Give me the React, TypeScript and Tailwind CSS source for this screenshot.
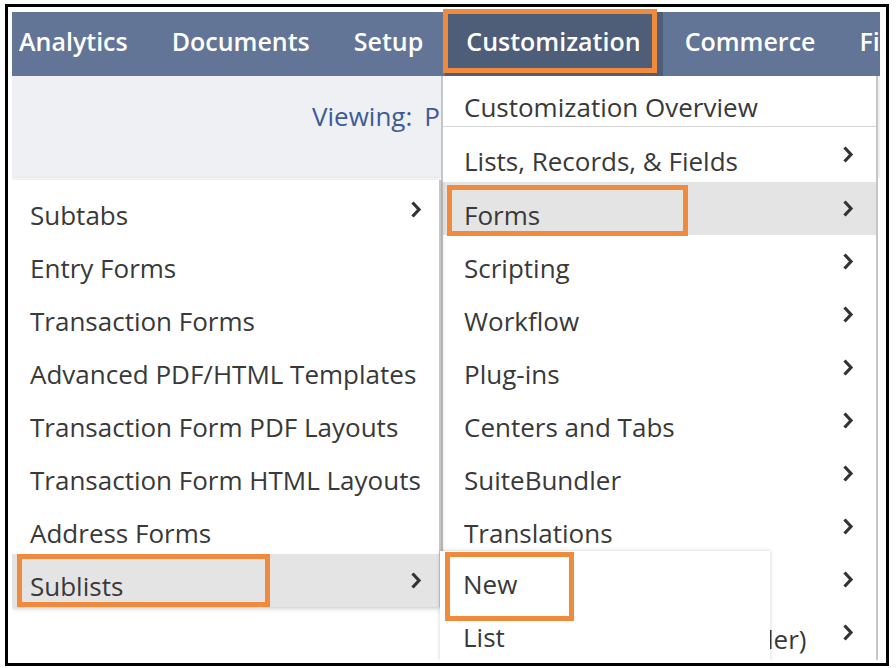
import React from 'react';

type Row = { label: string; sub?: boolean; active?: boolean };

const Chevron = () => (
  <svg width="12" height="19" viewBox="0 0 12 19" className="shrink-0">
    <path d="M2.5 2.5 L9 9.5 L2.5 16.5" fill="none" stroke="#333333" strokeWidth="3.2" />
  </svg>
);

const navItems = ['Analytics', 'Documents', 'Setup', 'Customization', 'Commerce', 'Financial'];

const formsMenu: Row[] = [
  { label: 'Subtabs', sub: true },
  { label: 'Entry Forms' },
  { label: 'Transaction Forms' },
  { label: 'Advanced PDF/HTML Templates' },
  { label: 'Transaction Form PDF Layouts' },
  { label: 'Transaction Form HTML Layouts' },
  { label: 'Address Forms' },
  { label: 'Sublists', sub: true, active: true },
];

const customMenu: Row[] = [
  { label: 'Forms', sub: true, active: true },
  { label: 'Scripting', sub: true },
  { label: 'Workflow', sub: true },
  { label: 'Plug-ins', sub: true },
  { label: 'Centers and Tabs', sub: true },
  { label: 'SuiteBundler', sub: true },
  { label: 'Translations', sub: true },
  { label: '', sub: true },
  { label: 'Integration (Custom Reader)', sub: true },
];

// orange callout frame drawn over the screenshot
const Callout = ({ className }: { className: string }) => (
  <div className={`absolute border-[5px] border-[#f08a3c] pointer-events-none ${className}`} />
);

export default function App() {
  return (
    <div className="relative w-[896px] h-[668px] bg-white pt-[4px] pl-[5px] font-['Open_Sans',sans-serif] text-[26px] leading-[35px] text-[#393939]">
      <div className="w-[884px] h-[662px] border-[3px] border-black pt-[5px] pl-[4px]">
        <div className="relative w-[868px] h-[648px] overflow-hidden bg-white">
          {/* Top nav */}
          <div className="h-[64px] bg-[#637596] overflow-hidden">
            <div className="flex h-full -ml-[15px] whitespace-nowrap text-[25px]">
              {navItems.map((item) => (
                <div
                  key={item}
                  className={`flex items-center px-[22px] pb-[6px] font-semibold text-white ${
                    item === 'Customization' ? 'bg-[#4e5d78] pl-[21px]' : ''
                  }`}
                >
                  {item}
                </div>
              ))}
            </div>
          </div>

          {/* Viewing band */}
          <div className="h-[102px] bg-[#eff0f4] pt-[23px] pl-[300px] whitespace-nowrap text-[#3d5c95]">
            Viewing:<span className="ml-[12px]">P</span>
          </div>

          {/* Customization dropdown */}
          <div className="absolute left-[429px] top-[64px] bottom-0 w-[437px] bg-white border-l-2 border-r-2 border-[#c6c6c6]">
            <div className="h-[51px] pt-[14px] pl-[21px] border-b border-[#d6d6d6] whitespace-nowrap">
              Customization Overview
            </div>
            <div className="h-[55px] flex justify-between pl-[21px] pr-[22px]">
              <span className="pt-[17px] whitespace-nowrap">Lists, Records, &amp; Fields</span>
              <span className="self-center"><Chevron /></span>
            </div>
            {customMenu.map((r, i) => (
              <div
                key={i}
                className={`h-[53px] flex justify-between pl-[21px] pr-[22px] ${r.active ? 'bg-[#e4e4e4]' : ''}`}
              >
                <span className="pt-[16px] whitespace-nowrap">{r.label}</span>
                {r.sub && <span className="self-center"><Chevron /></span>}
              </div>
            ))}
          </div>

          {/* Forms submenu */}
          <div className="absolute left-0 top-[168px] w-[429px] h-[427px] pt-[3px] bg-white border-r-2 border-[#c6c6c6] shadow-[0_1px_5px_rgba(0,0,0,0.25)]">
            {formsMenu.map((r) => (
              <div
                key={r.label}
                className={`h-[53px] flex justify-between pl-[18px] pr-[17px] ${r.active ? 'bg-[#e4e4e4]' : ''}`}
              >
                <span className="pt-[15px] whitespace-nowrap">{r.label}</span>
                {r.sub && <span className="self-center"><Chevron /></span>}
              </div>
            ))}
          </div>

          {/* Sublists submenu */}
          <div className="absolute left-[428px] top-[539px] w-[330px] bottom-0 bg-white shadow-[0_0_4px_rgba(0,0,0,0.2)]">
            <div className="h-[53px] pt-[16px] pl-[23px]">New</div>
            <div className="h-[53px] pt-[16px] pl-[23px]">List</div>
          </div>
        </div>
      </div>

      <Callout className="left-[443px] top-[9px] w-[214px] h-[64px]" />
      <Callout className="left-[447px] top-[185px] w-[241px] h-[51px]" />
      <Callout className="left-[17px] top-[554px] w-[253px] h-[53px]" />
      <Callout className="left-[445px] top-[552px] w-[129px] h-[69px]" />
    </div>
  );
}
